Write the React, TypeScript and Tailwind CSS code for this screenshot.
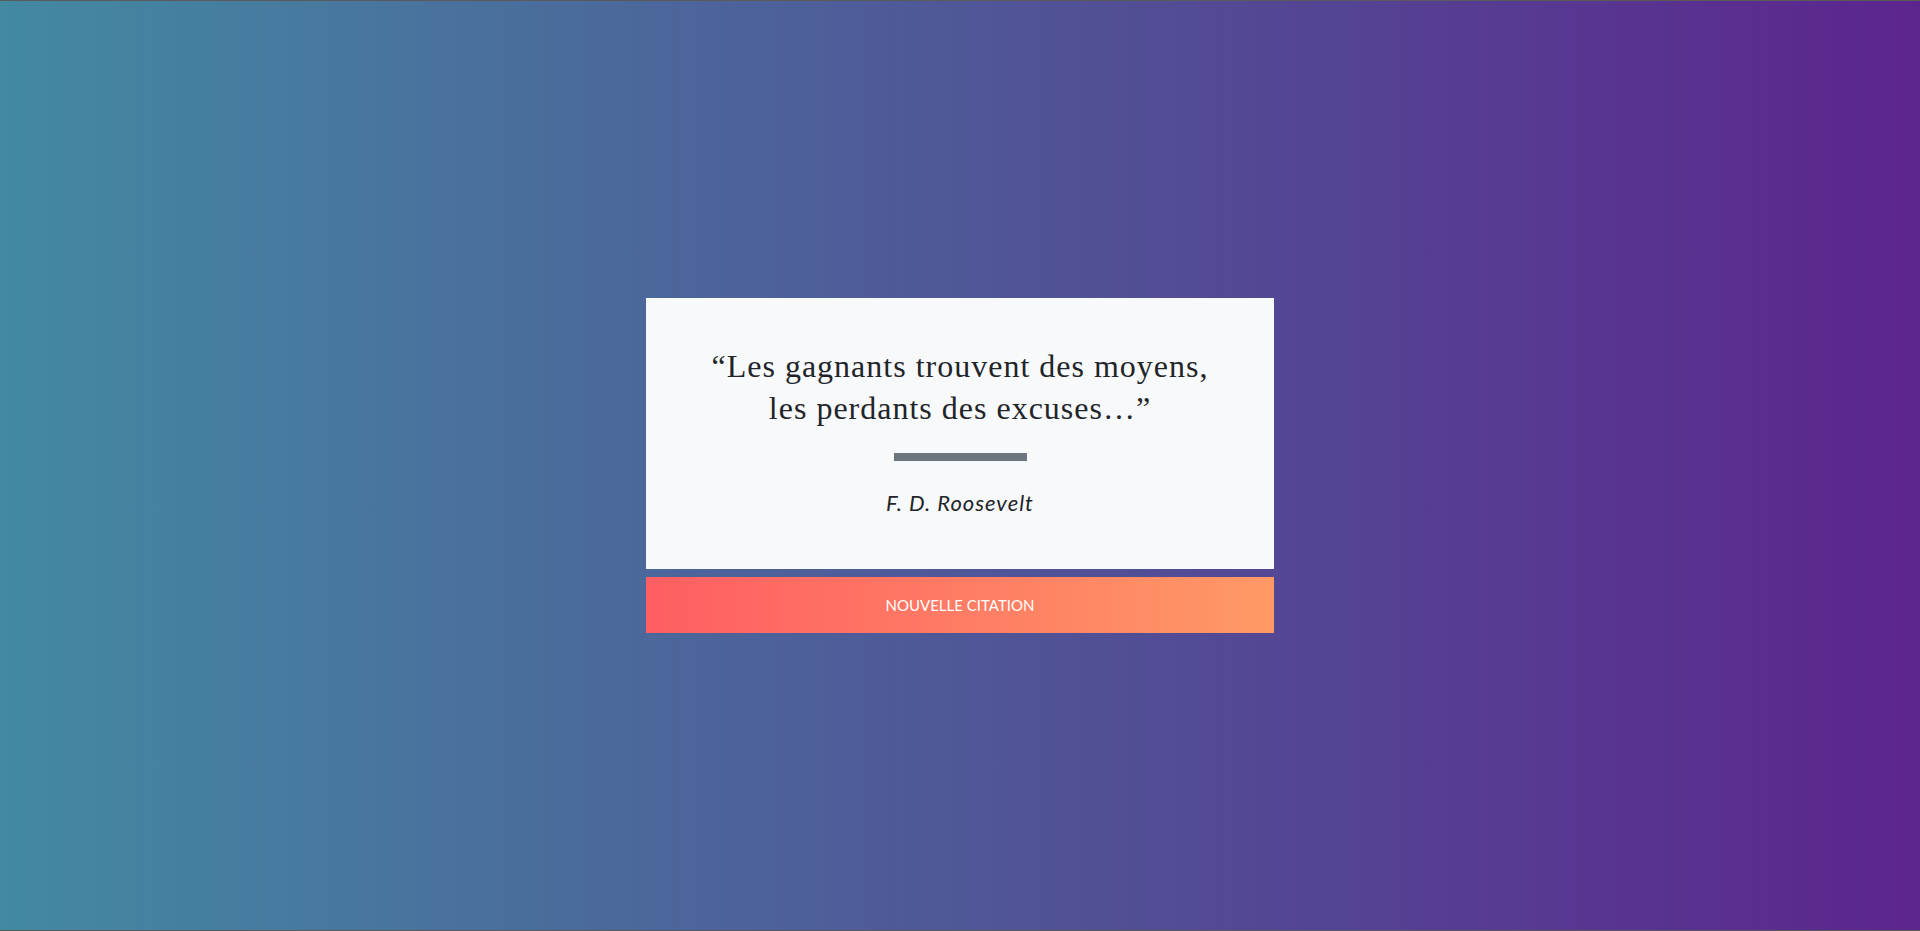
const App = () => {
  return (
    <div className="min-h-screen w-full flex items-center justify-center bg-linear-to-r/srgb from-[#4389a2] to-[#5c258d] border-y border-[#5a5a5a]">
      <div className="w-[628px] flex flex-col gap-2">
        <div className="bg-[#f8f9fa] px-12 pt-12 pb-[50px] flex flex-col items-center text-center">
          <p className="font-['Liberation_Serif',serif] text-[32px] leading-[41.6px] tracking-[1px] text-[#212529]">
            “Les gagnants trouvent des moyens,
            <br />
            les perdants des excuses…”
          </p>
          <div className="w-[133px] h-2 bg-[#6c757d] mt-6" />
          <p className="mt-[26px] font-['Lato',sans-serif] italic text-[22px] leading-[32px] tracking-[1px] text-[#212529]">
            F. D. Roosevelt
          </p>
        </div>
        <button className="h-14 w-full bg-linear-to-r/srgb from-[#ff5e62] to-[#ff9966] text-white font-['Lato',sans-serif] text-[15px] tracking-normal uppercase">
          Nouvelle citation
        </button>
      </div>
    </div>
  );
};

export default App;
